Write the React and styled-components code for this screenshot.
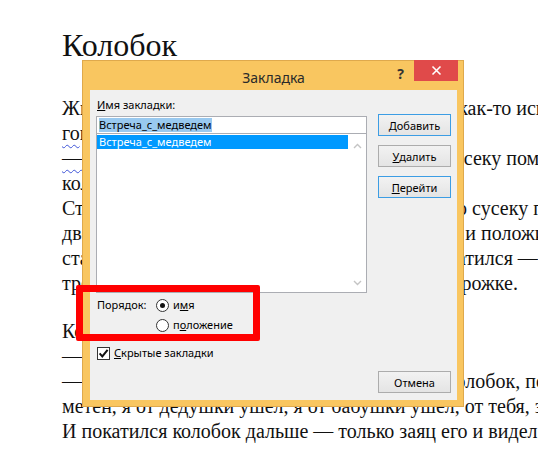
import React from 'react';
import styled, { createGlobalStyle } from 'styled-components';

const GlobalStyle = createGlobalStyle`
  html, body {
    margin: 0;
    padding: 0;
    background: #fff;
    overflow: hidden;
  }
`;

const lines = [
  'Жили-были старик со старухой. Вот однажды как-то испекла',
  null,
  '— Из чего печь-то? Муки нет. — А ты-то по сусеку помети',
  'колобок и наберётся.',
  'Старуха так и сделала, по коробу поскребла, по сусеку помела, муки',
  'две. Замесила на сметане, да изжарила в масле и положила на окно',
  'стала остужать у окошечка. Полежал, да и покатился — с окна',
  'тропинке, через тёмный лес, по полю, да по дорожке.',
];

const lines2 = [
  '— Не ешь меня, заяц! Я тебе спою — сказал колобок, покатился и запел',
  'метен, я от дедушки ушел, я от бабушки ушел, от тебя, зайца, подавно уйду!',
  'И покатился колобок дальше — только заяц его и видел!',
];

export default function App() {
  return (
    <Page>
      <GlobalStyle />
      <Doc>
        <Heading>Колобок</Heading>
        <Body>
          {lines.map((text, i) => {
            if (i === 1) {
              return (
                <Line key={i}>
                  <Wavy>го</Wavy>ворит старик старухе: испеки колобок.
                </Line>
              );
            }
            if (i === 2) {
              return (
                <Line key={i}>
                  <Wavy>—</Wavy>{text.slice(1)}
                </Line>
              );
            }
            return <Line key={i}>{text}</Line>;
          })}
        </Body>
        <SubHeading>Колобок и заяц</SubHeading>
        <Line>— Колобок, колобок, я тебя съем!</Line>
        {lines2.map((text, i) => (
          <Line key={i}>{text}</Line>
        ))}
      </Doc>

      <Dialog>
        <TitleBar>
          <span />
          <Caption>Закладка</Caption>
          <Controls>
            <Help>?</Help>
            <Close>
              <svg width="11" height="11" viewBox="0 0 11 11">
                <path d="M1.5 1.5 L9.5 9.5 M9.5 1.5 L1.5 9.5" stroke="#fff" strokeWidth="1.6" />
              </svg>
            </Close>
          </Controls>
        </TitleBar>

        <Content>
          <TopGrid>
            <LeftCol>
              <FieldLabel><u>И</u>мя закладки:</FieldLabel>
              <TextBox>
                <Selected>Встреча_с_медведем</Selected>
              </TextBox>
              <ListBox>
                <Items>
                  <Item $active>Встреча_с_медведем</Item>
                </Items>
                <ScrollBar>
                  <svg width="9" height="6" viewBox="0 0 9 6">
                    <path d="M1 5 L4.5 1.5 L8 5" fill="none" stroke="#c4c4c4" strokeWidth="1.4" />
                  </svg>
                  <svg width="9" height="6" viewBox="0 0 9 6">
                    <path d="M1 1 L4.5 4.5 L8 1" fill="none" stroke="#c4c4c4" strokeWidth="1.4" />
                  </svg>
                </ScrollBar>
              </ListBox>
            </LeftCol>
            <ButtonCol>
              <Button $focus><u>Д</u>обавить</Button>
              <Button><u>У</u>далить</Button>
              <Button $focus><u>П</u>ерейти</Button>
            </ButtonCol>
          </TopGrid>

          <OrderRow>
            <span>Порядок:</span>
            <Options>
              <Option>
                <Radio $checked />
                <span>и<u>м</u>я</span>
              </Option>
              <Option>
                <Radio />
                <span>п<u>о</u>ложение</span>
              </Option>
            </Options>
          </OrderRow>

          <CheckRow>
            <CheckBox>
              <svg width="11" height="11" viewBox="0 0 11 11">
                <path d="M1.6 5.4 L4.3 8.4 L9.6 1.8" fill="none" stroke="#111" strokeWidth="2" />
              </svg>
            </CheckBox>
            <span><u>С</u>крытые закладки</span>
          </CheckRow>

          <Footer>
            <Button>Отмена</Button>
          </Footer>
        </Content>
      </Dialog>

      <Marker />
    </Page>
  );
}

const Page = styled.div`
  position: relative;
  width: 538px;
  height: 469px;
  overflow: hidden;
  background: #fff;
`;

const Doc = styled.div`
  padding: 25px 0 0 62px;
  font-family: "Liberation Serif", "Times New Roman", serif;
  color: #111;
  white-space: nowrap;
`;

const Heading = styled.h1`
  margin: 0;
  font-size: 32px;
  line-height: 40px;
  font-weight: normal;
`;

const Body = styled.div`
  margin-top: 31px;
`;

const Line = styled.div`
  font-size: 20px;
  line-height: 25px;
`;

const SubHeading = styled.h2`
  margin: 23px 0 0;
  font-size: 20px;
  line-height: 25px;
  font-weight: normal;
`;

const Wavy = styled.span`
  text-decoration: underline wavy #3f55d8;
  text-decoration-thickness: 1px;
  text-underline-offset: 4px;
`;

const Dialog = styled.div`
  position: absolute;
  left: 82px;
  top: 60px;
  width: 382px;
  height: 347px;
  box-sizing: border-box;
  display: flex;
  flex-direction: column;
  padding: 0 6px 6px 7px;
  background: #f9c660;
  border: 1px solid #dfa94c;
  font-family: "Noto Sans", "Open Sans", sans-serif;
  font-size: 11px;
  color: #000;
`;

const TitleBar = styled.div`
  height: 29px;
  display: grid;
  grid-template-columns: 1fr auto 1fr;
  align-items: center;
`;

const Caption = styled.div`
  font-size: 14px;
  color: #2a2a2a;
  padding-top: 3px;
`;

const Controls = styled.div`
  justify-self: end;
  align-self: start;
  display: flex;
  align-items: flex-start;
`;

const Help = styled.div`
  font-size: 14px;
  font-weight: bold;
  color: #333;
  margin: 3px 10px 0 0;
`;

const Close = styled.div`
  width: 44px;
  height: 21px;
  margin-top: -1px;
  margin-right: -1px;
  background: #e04a4a;
  display: flex;
  align-items: center;
  justify-content: center;
`;

const Content = styled.div`
  flex: 1;
  background: #f0f0f0;
  padding: 7px 6px 0;
  display: flex;
  flex-direction: column;
`;

const TopGrid = styled.div`
  display: grid;
  grid-template-columns: 271px 73px;
  column-gap: 11px;
`;

const LeftCol = styled.div`
  display: flex;
  flex-direction: column;
`;

const FieldLabel = styled.div`
  line-height: 16px;
  margin: 0 0 3px 1px;
`;

const TextBox = styled.div`
  height: 18px;
  box-sizing: border-box;
  border: 1px solid #abadb3;
  background: #fff;
  padding: 0 2px;
  display: flex;
  align-items: center;
`;

const Selected = styled.span`
  background: #99c9ef;
  line-height: 14px;
`;

const ListBox = styled.div`
  height: 159px;
  box-sizing: border-box;
  border: 1px solid #abadb3;
  border-top: none;
  background: #fff;
  display: flex;
`;

const Items = styled.div`
  flex: 1;
  padding-top: 1px;
`;

const Item = styled.div`
  height: 14px;
  line-height: 14px;
  padding-left: 2px;
  background: ${(p) => (p.$active ? '#0099ff' : 'transparent')};
  color: ${(p) => (p.$active ? '#fff' : '#000')};
`;

const ScrollBar = styled.div`
  width: 18px;
  display: flex;
  flex-direction: column;
  justify-content: space-between;
  align-items: center;
  padding: 9px 0 6px;
`;

const ButtonCol = styled.div`
  margin-top: 17px;
  display: flex;
  flex-direction: column;
  gap: 9px;
`;

const Button = styled.div`
  width: 73px;
  height: 22px;
  box-sizing: border-box;
  border: 1px solid ${(p) => (p.$focus ? '#3c9de4' : '#acacac')};
  background: linear-gradient(#f2f2f2, #e4e4e4);
  display: flex;
  align-items: center;
  justify-content: center;
`;

const OrderRow = styled.div`
  margin-top: 4px;
  display: grid;
  grid-template-columns: 59px auto;
  padding-left: 1px;
  line-height: 16px;
`;

const Options = styled.div`
  display: flex;
  flex-direction: column;
  gap: 4px;
`;

const Option = styled.div`
  display: flex;
  align-items: center;
  gap: 4px;
`;

const Radio = styled.span`
  width: 13px;
  height: 13px;
  box-sizing: border-box;
  border-radius: 50%;
  border: 1px solid #333;
  background: #fff;
  display: flex;
  align-items: center;
  justify-content: center;
  &::after {
    content: '';
    width: 5px;
    height: 5px;
    border-radius: 50%;
    background: ${(p) => (p.$checked ? '#111' : 'transparent')};
  }
`;

const CheckRow = styled.div`
  margin-top: 12px;
  padding-left: 1px;
  display: flex;
  align-items: center;
  gap: 4px;
  line-height: 16px;
`;

const CheckBox = styled.span`
  width: 13px;
  height: 13px;
  box-sizing: border-box;
  border: 1px solid #333;
  background: #fff;
  display: flex;
  align-items: center;
  justify-content: center;
`;

const Footer = styled.div`
  margin-top: 10px;
  display: flex;
  justify-content: flex-end;
`;

const Marker = styled.div`
  position: absolute;
  left: 76px;
  top: 285px;
  width: 184px;
  height: 56px;
  box-sizing: border-box;
  border: 7px solid #ff0000;
  border-radius: 2px;
`;
